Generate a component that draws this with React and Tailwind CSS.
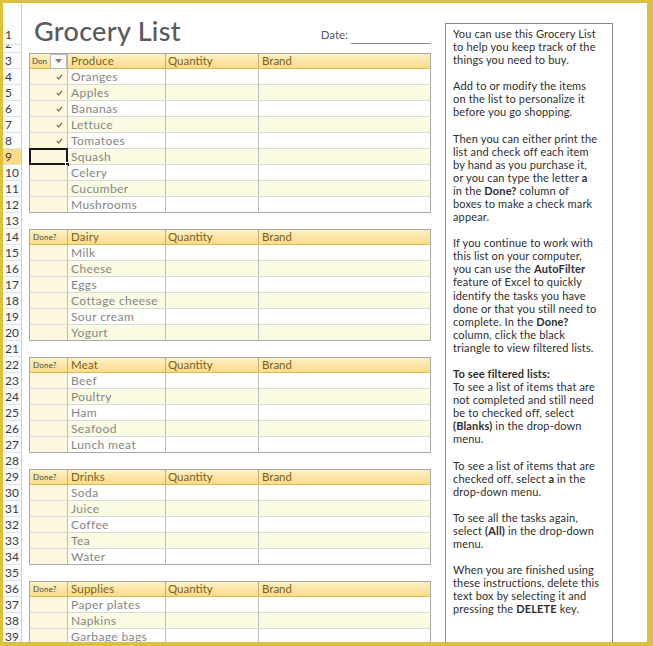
import React from "react";

const sections = [
  {
    name: "Produce",
    start: 3,
    filter: true,
    items: ["Oranges", "Apples", "Bananas", "Lettuce", "Tomatoes", "Squash", "Celery", "Cucumber", "Mushrooms"],
    checked: 5,
  },
  { name: "Dairy", start: 14, items: ["Milk", "Cheese", "Eggs", "Cottage cheese", "Sour cream", "Yogurt"] },
  { name: "Meat", start: 22, items: ["Beef", "Poultry", "Ham", "Seafood", "Lunch meat"] },
  { name: "Drinks", start: 29, items: ["Soda", "Juice", "Coffee", "Tea", "Water"] },
  { name: "Supplies", start: 36, items: ["Paper plates", "Napkins", "Garbage bags"] },
];

// flatten the sheet into rows 3..39
const buildRows = () => {
  const rows = [];
  let n = 3;
  sections.forEach((s) => {
    while (n < s.start) {
      rows.push({ n, type: "blank" });
      n++;
    }
    rows.push({ n, type: "head", section: s });
    n++;
    s.items.forEach((item, i) => {
      rows.push({
        n,
        type: "item",
        item,
        alt: i % 2 === 1,
        checked: s.checked ? i < s.checked : false,
        selected: n === 9,
        last: i === s.items.length - 1,
      });
      n++;
    });
  });
  return rows;
};

const Check = () => (
  <svg width="7" height="6" viewBox="0 0 7 6">
    <path d="M0.8 3.2 L2.6 5 L6.2 0.8" fill="none" stroke="#5a5a5a" strokeWidth="1.1" />
  </svg>
);

const RowHead = ({ n, active, tall }) => (
  <div
    className={`w-[19px] shrink-0 border-r border-b border-r-[#c3cedc] border-b-[#dde3ec] pl-[2px] text-[12px] text-[#3a3a3a] flex ${
      tall ? "items-end pb-[0px]" : "items-center"
    } ${active ? "bg-[#fbdc84]" : "bg-[#fbfcfe]"}`}
  >
    {n}
  </div>
);

const HeadRow = ({ section }) => (
  <div className="ml-[7px] w-[402px] h-full flex border-x border-t border-[#a8a8a8] border-b border-b-[#d9b95c] bg-gradient-to-b from-[#fdf1c6] to-[#fbdc86] text-[11.5px] text-[#7c5f12]">
    <div className="w-[38px] shrink-0 border-r border-[#c9b374] flex items-center">
      {section.filter ? (
        <>
          <span className="pl-[2px] text-[8px] text-[#4a4a4a] w-[20px]">Don</span>
          <span className="ml-auto w-[17px] h-[15px] border border-[#b9b9b9] bg-[#fbfbf6] flex items-center justify-center">
            <svg width="7" height="4" viewBox="0 0 7 4">
              <path d="M0 0 L7 0 L3.5 4 Z" fill="#7a7a7a" />
            </svg>
          </span>
        </>
      ) : (
        <span className="pl-[3px] text-[8px] text-[#4a4a4a] tracking-[0.2px]">Done?</span>
      )}
    </div>
    <div className="w-[98px] shrink-0 border-r border-[#c9b374] pl-[3px] flex items-center tracking-[0.2px]">{section.name}</div>
    <div className="w-[93px] shrink-0 border-r border-[#c9b374] pl-[2px] flex items-center">Quantity</div>
    <div className="flex-1 pl-[3px] flex items-center">Brand</div>
  </div>
);

const ItemRow = ({ row }) => (
  <div
    className={`ml-[7px] w-[402px] h-full flex border-x border-[#a8a8a8] border-b text-[12px] tracking-[0.4px] text-[#858585] ${
      row.last ? "border-b-[#a8a8a8]" : "border-b-[#dadada]"
    } ${row.alt ? "bg-[#fcfbe3]" : "bg-[#fffffd]"}`}
  >
    <div className="relative w-[38px] shrink-0 border-r border-[#bdbdbd] bg-[#fcf7de] flex items-center justify-end pr-[4px]">
      {row.checked && <Check />}
      {row.selected && (
        <>
          <div className="absolute -left-[1px] -top-[1px] -right-[1px] -bottom-[1px] border-2 border-[#1a1a1a]" />
          <div className="absolute -right-[3px] -bottom-[3px] w-[5px] h-[5px] bg-[#1a1a1a] border border-white" />
        </>
      )}
    </div>
    <div className="w-[98px] shrink-0 border-r border-[#bdbdbd] pl-[3px] flex items-center whitespace-nowrap">{row.item}</div>
    <div className="w-[93px] shrink-0 border-r border-[#bdbdbd]" />
    <div className="flex-1" />
  </div>
);

const B = ({ children }) => <span className="font-bold">{children}</span>;

const note = [
  "You can use this Grocery List",
  "to help you keep track of the",
  "things you need to buy.",
  "",
  "Add to or modify the items",
  "on the list to personalize it",
  "before you go shopping.",
  "",
  "Then you can either print the",
  "list and check off each item",
  "by hand as you purchase it,",
  <>or you can type the letter <B>a</B></>,
  <>in the <B>Done?</B> column of</>,
  "boxes to make a check mark",
  "appear.",
  "",
  "If you continue to work with",
  "this list on your computer,",
  <>you can use the <B>AutoFilter</B></>,
  "feature of Excel to quickly",
  "identify the tasks you have",
  "done or that you still need to",
  <>complete. In the <B>Done?</B></>,
  "column, click the black",
  "triangle to view filtered lists.",
  "",
  <B>To see filtered lists:</B>,
  "To see a list of items that are",
  "not completed and still need",
  "be to checked off, select",
  <><B>(Blanks)</B> in the drop-down</>,
  "menu.",
  "",
  "To see a list of items that are",
  <>checked off, select <B>a</B> in the</>,
  "drop-down menu.",
  "",
  "To see all the tasks again,",
  <>select <B>(All)</B> in the drop-down</>,
  "menu.",
  "",
  "When you are finished using",
  "these instructions, delete this",
  "text box by selecting it and",
  <>pressing the <B>DELETE</B> key.</>,
];

const App = () => {
  const rows = buildRows();

  return (
    <div className="w-[653px] h-[646px] bg-[#dcc23c] pt-[3px] pl-[3px] pr-[6px] pb-[4px] font-['Lato',sans-serif]">
      <div className="w-full h-full bg-white flex overflow-hidden">
        {/* sheet */}
        <div className="w-[442px] shrink-0 flex flex-col">
          <div className="h-[42px] shrink-0 flex">
            <RowHead n={1} tall />
            <div className="flex-1 flex items-end pb-[1px]">
              <span className="ml-[12px] text-[27px] leading-none text-[#5a5a5a] font-medium tracking-[0.3px]">
                Grocery List
              </span>
              <div className="ml-auto mr-[14px] flex items-end">
                <span className="text-[11.5px] text-[#5a5a5a] mb-[1px]">Date:</span>
                <div className="ml-[3px] w-[80px] border-b border-[#8a8a8a]" />
              </div>
            </div>
          </div>
          <div className="h-[8px] shrink-0 flex overflow-hidden">
            <div className="w-[19px] shrink-0 border-r border-b border-r-[#c3cedc] border-b-[#dde3ec] bg-[#fbfcfe] pl-[2px] text-[12px] leading-[12px] text-[#3a3a3a] overflow-hidden">
              <span className="block -mt-[7px]">2</span>
            </div>
            <div className="flex-1" />
          </div>
          {rows.map((row) => (
            <div key={row.n} className="h-[16px] shrink-0 flex">
              <RowHead n={row.n} active={row.n === 9} />
              <div className="flex-1">
                {row.type === "head" && <HeadRow section={row.section} />}
                {row.type === "item" && <ItemRow row={row} />}
              </div>
            </div>
          ))}
        </div>

        {/* instructions text box */}
        <div className="mt-[20px] w-[168px] shrink-0 border border-b-0 border-[#8a8a8a] pl-[7px] pt-[3px] text-[11px] tracking-[0.15px] leading-[13.09px] text-[#2e2e2e] whitespace-nowrap">
          {note.map((line, i) => (
            <div key={i} className="h-[13.09px]">
              {line}
            </div>
          ))}
        </div>
      </div>
    </div>
  );
};

export default App;
